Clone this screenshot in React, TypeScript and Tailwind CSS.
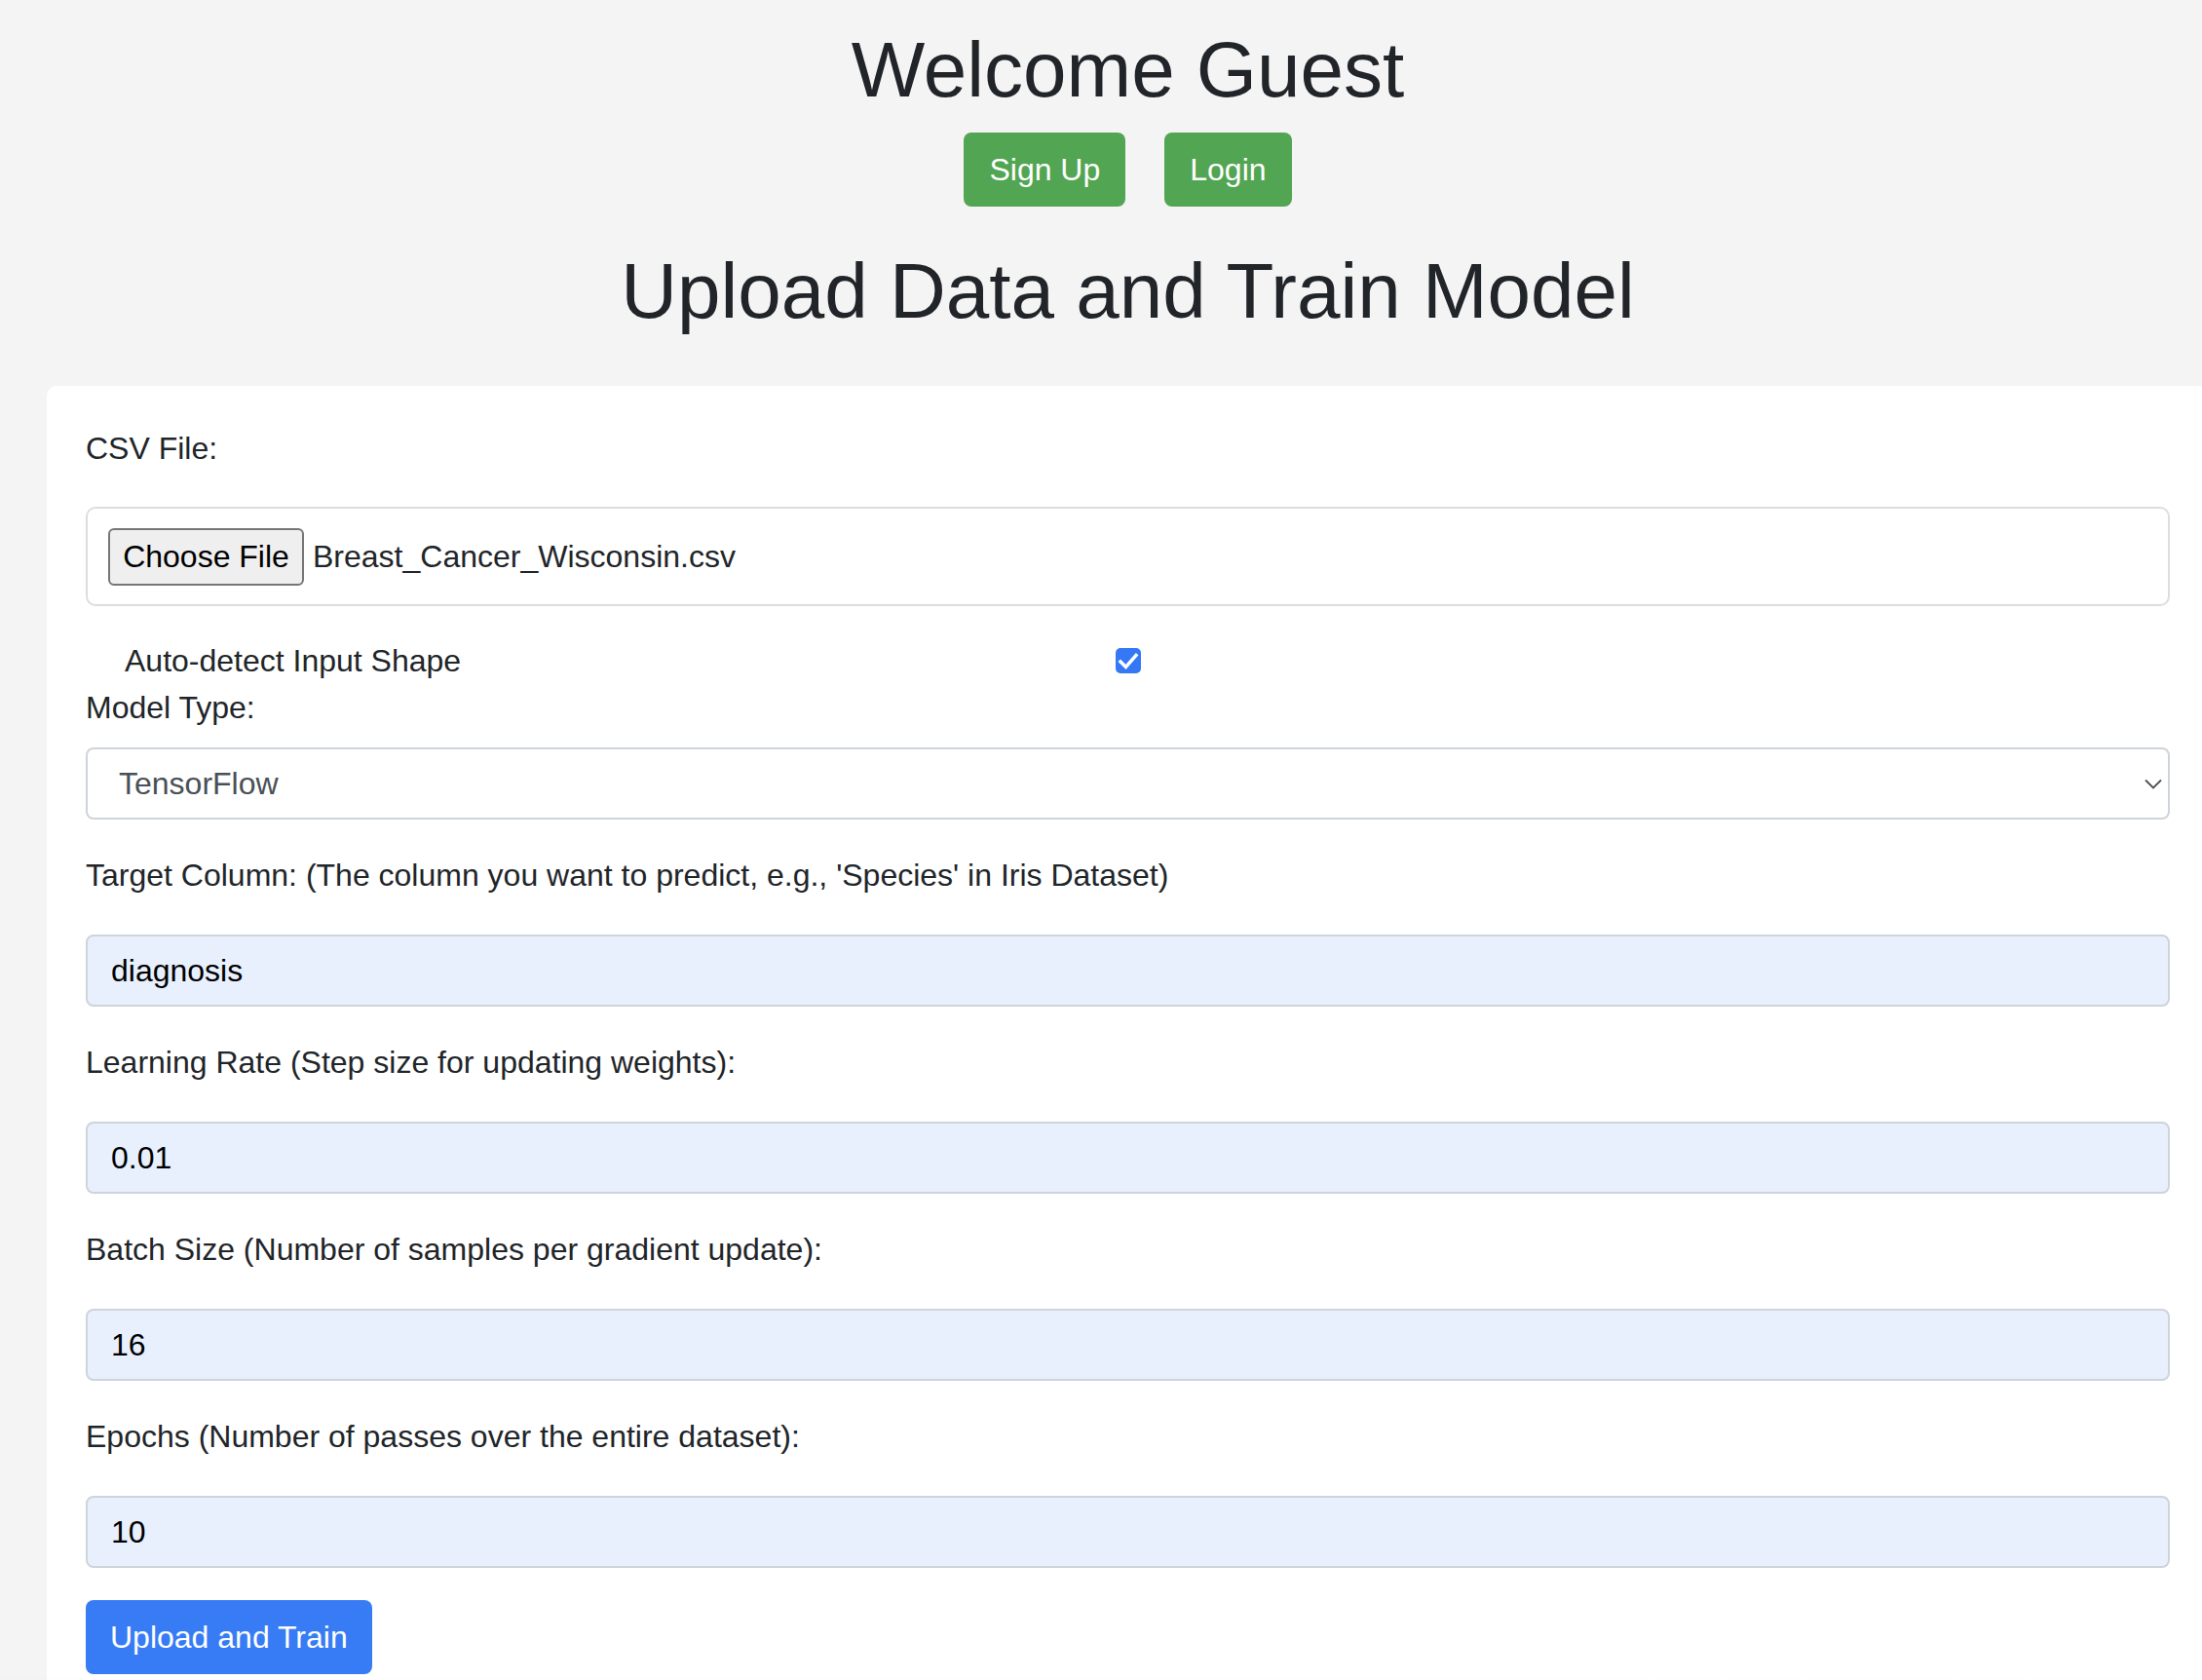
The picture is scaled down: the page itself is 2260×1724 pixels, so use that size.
import { useState } from "react"

const fields = [
  { label: "Target Column: (The column you want to predict, e.g., 'Species' in Iris Dataset)", value: "diagnosis" },
  { label: "Learning Rate (Step size for updating weights):", value: "0.01" },
  { label: "Batch Size (Number of samples per gradient update):", value: "16" },
  { label: "Epochs (Number of passes over the entire dataset):", value: "10" },
]

export default function App() {
  const [autoDetect, setAutoDetect] = useState(true)

  return (
    <div className="relative min-h-screen overflow-hidden bg-[#f4f4f4] font-['Liberation_Sans',Arial,sans-serif] text-[32px] leading-[48px] text-[#212529]">
      <div className="ml-[48px] w-[2219px]">
        <h1 className="pt-[24px] text-center text-[80px] leading-[96px]">Welcome Guest</h1>
        <div className="mt-[16px] flex justify-center gap-[40px]">
          <button className="h-[76px] rounded-[8px] bg-[#52a552] px-[26px] text-white">Sign Up</button>
          <button className="h-[76px] rounded-[8px] bg-[#52a552] px-[26px] text-white">Login</button>
        </div>
        <h1 className="mt-[39px] text-center text-[80px] leading-[96px]">Upload Data and Train Model</h1>

        {/* form card */}
        <div className="mt-[49px] rounded-[10px] bg-white p-[40px]">
          <div>CSV File:</div>
          <div className="mt-[36px] flex h-[102px] items-center rounded-[10px] border-2 border-[#dddddd] pl-[21px]">
            <span className="flex h-[59px] w-[201px] items-center justify-center rounded-[6px] border-2 border-[#767676] bg-[#efefef] text-black">
              Choose File
            </span>
            <span className="ml-[9px]">Breast_Cancer_Wisconsin.csv</span>
          </div>

          <div className="mt-[32px] flex h-[48px] items-center">
            <span className="w-[1057px] pl-[40px]">Auto-detect Input Shape</span>
            <button
              onClick={() => setAutoDetect(!autoDetect)}
              className={autoDetect ? "flex h-[26px] w-[26px] items-center justify-center rounded-[5px] bg-[#3478f6]" : "h-[26px] w-[26px] rounded-[5px] border-2 border-[#767676] bg-white"}
            >
              {autoDetect && (
                <svg width="26" height="26" viewBox="0 0 26 26">
                  <path d="M5 14 L10.5 19.5 L21 7.5" fill="none" stroke="white" strokeWidth="3.5" strokeLinecap="square" />
                </svg>
              )}
            </button>
          </div>

          <div>Model Type:</div>
          <div className="mt-[17px] flex h-[74px] items-center justify-between rounded-[8px] border-2 border-[#ced4da] pl-[32px] pr-[6px] text-[#495057]">
            <span>TensorFlow</span>
            <svg width="18" height="11" viewBox="0 0 18 11">
              <path d="M1 1.5 L9 9.5 L17 1.5" fill="none" stroke="#4a4f55" strokeWidth="1.8" />
            </svg>
          </div>

          {fields.map((f, i) => (
            <div key={f.label} className={i === 0 ? "mt-[33px]" : "mt-[33px]"}>
              <div>{f.label}</div>
              <div className="mt-[37px] flex h-[74px] items-center rounded-[8px] border-2 border-[#ced4da] bg-[#e8f0fe] px-[24px] text-black">
                {f.value}
              </div>
            </div>
          ))}

          <button className="mt-[33px] h-[76px] rounded-[8px] bg-[#377bf5] px-[25px] text-white">Upload and Train</button>
        </div>
      </div>
      <div className="pointer-events-none absolute bottom-0 left-0 right-0 h-[40px] bg-gradient-to-b from-transparent to-black/[0.025]" />
    </div>
  )
}
